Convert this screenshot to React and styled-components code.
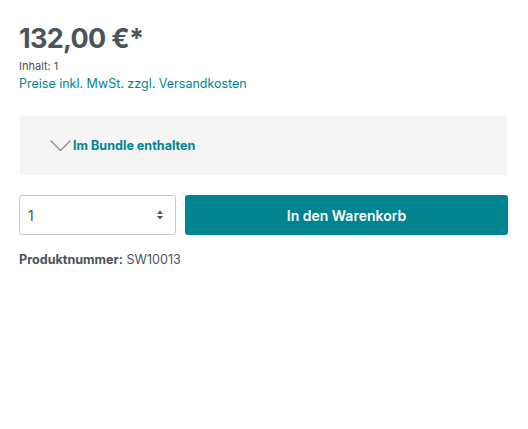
import styled, { createGlobalStyle } from 'styled-components';

const GlobalStyle = createGlobalStyle`
  body {
    margin: 0;
    background: #fff;
    font-family: Inter, 'Noto Sans', sans-serif;
    color: #4a545b;
  }
`;

const Wrapper = styled.div`
  width: 489px;
  padding: 21px 20px 0 19px;
`;

const Price = styled.p`
  margin: 0;
  font-size: 27px;
  font-weight: 700;
  letter-spacing: -0.7px;
  line-height: 36px;
  color: #4a545b;
`;

const Content = styled.p`
  margin: 1px 0 0;
  font-size: 11px;
  line-height: 16px;
  color: #4a545b;
`;

const TaxLink = styled.a`
  display: block;
  font-size: 12.5px;
  line-height: 19px;
  color: #008490;
  text-decoration: none;
`;

const BundleBox = styled.div`
  margin: 23px 1px 0;
  height: 59px;
  background: #f5f5f5;
  display: flex;
  align-items: center;
  padding-left: 30px;
`;

const BundleToggle = styled.button`
  display: flex;
  align-items: center;
  gap: 2px;
  background: none;
  border: 0;
  padding: 0;
  font-family: inherit;
  font-size: 12.6px;
  font-weight: 700;
  color: #008490;
  cursor: pointer;
`;

const BuyRow = styled.div`
  margin-top: 20px;
  display: flex;
  gap: 9px;
`;

const QtySelect = styled.div`
  box-sizing: border-box;
  flex: none;
  width: 157px;
  height: 40px;
  border: 1px solid #c4c8cc;
  border-radius: 3px;
  display: flex;
  align-items: center;
  justify-content: space-between;
  padding: 0 11px 0 8px;
  font-size: 14px;
  color: #4a545b;
`;

const BuyButton = styled.button`
  flex: 1;
  height: 40px;
  border: 0;
  border-radius: 3px;
  background: #008490;
  color: #fff;
  font-family: inherit;
  font-size: 14px;
  font-weight: 600;
  cursor: pointer;
`;

const ProductNumber = styled.p`
  margin: 16px 0 0;
  font-size: 12.6px;
  line-height: 18px;
  color: #4a545b;

  strong {
    font-weight: 700;
  }
`;

function Chevron() {
  return (
    <svg width="21" height="11" viewBox="0 0 21 11" fill="none">
      <path d="M0.5 0.5l10 10 10-10" stroke="#8a8f94" strokeWidth="1.4" />
    </svg>
  );
}

function Carets() {
  return (
    <svg width="8" height="10" viewBox="0 0 8 10">
      <path d="M4 0.5L7 4H1z" fill="#4a545b" />
      <path d="M4 9.5L7 6H1z" fill="#4a545b" />
    </svg>
  );
}

export default function App() {
  return (
    <>
      <GlobalStyle />
      <Wrapper>
        <Price>132,00 €*</Price>
        <Content>Inhalt: 1</Content>
        <TaxLink href="#">Preise inkl. MwSt. zzgl. Versandkosten</TaxLink>
        <BundleBox>
          <BundleToggle>
            <Chevron />
            Im Bundle enthalten
          </BundleToggle>
        </BundleBox>
        <BuyRow>
          <QtySelect>
            <span>1</span>
            <Carets />
          </QtySelect>
          <BuyButton>In den Warenkorb</BuyButton>
        </BuyRow>
        <ProductNumber>
          <strong>Produktnummer:</strong> SW10013
        </ProductNumber>
      </Wrapper>
    </>
  );
}
